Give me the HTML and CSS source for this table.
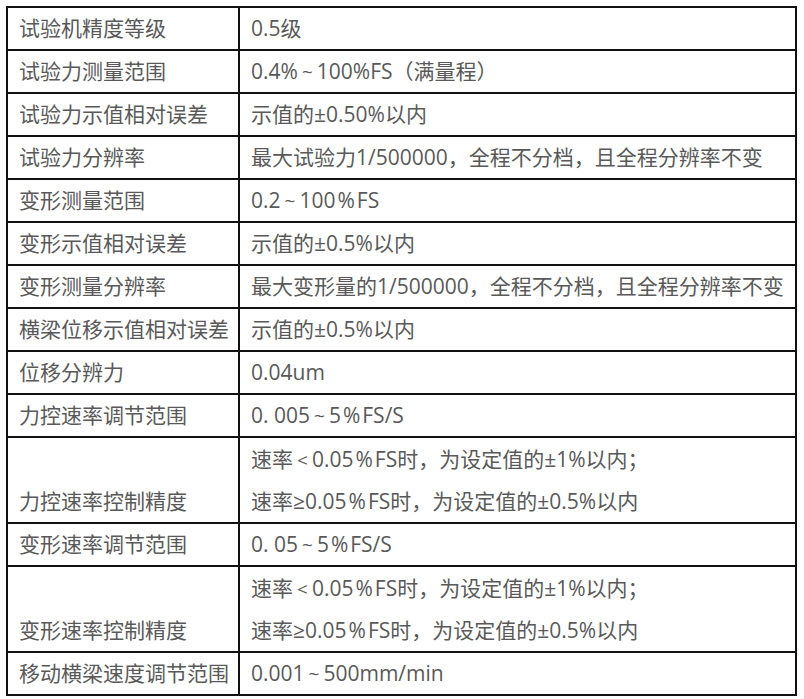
FILE: index.html
```html
<!DOCTYPE html>
<html lang="zh-CN">
<head>
<meta charset="utf-8">
<link rel="stylesheet" href="styles.css">
</head>
<body>
<div class="wrap">
<table class="spec">
<tr><td class="k">试验机精度等级</td><td class="v">0.5级</td></tr>
<tr><td class="k">试验力测量范围</td><td class="v">0.4%<span class="t">~</span>100%FS（满量程）</td></tr>
<tr><td class="k">试验力示值相对误差</td><td class="v">示值的±0.50%以内</td></tr>
<tr><td class="k">试验力分辨率</td><td class="v">最大试验力1/500000，全程不分档，且全程分辨率不变</td></tr>
<tr><td class="k">变形测量范围</td><td class="v">0.2<span class="t">~</span>100<span class="p">%</span>FS</td></tr>
<tr><td class="k">变形示值相对误差</td><td class="v">示值的±0.5%以内</td></tr>
<tr><td class="k">变形测量分辨率</td><td class="v">最大变形量的1/500000，全程不分档，且全程分辨率不变</td></tr>
<tr><td class="k">横梁位移示值相对误差</td><td class="v">示值的±0.5%以内</td></tr>
<tr><td class="k">位移分辨力</td><td class="v">0.04um</td></tr>
<tr><td class="k">力控速率调节范围</td><td class="v">0. 005<span class="t">~</span>5<span class="p">%</span>FS/S</td></tr>
<tr class="tall"><td class="k">力控速率控制精度</td><td class="v"><div class="ln">速率<span class="t">&lt;</span>0.05<span class="p">%</span>FS时，为设定值的±1%以内；</div><div class="ln">速率≥0.05<span class="p">%</span>FS时，为设定值的±0.5%以内</div></td></tr>
<tr><td class="k">变形速率调节范围</td><td class="v">0. 05<span class="t">~</span>5<span class="p">%</span>FS/S</td></tr>
<tr class="tall"><td class="k">变形速率控制精度</td><td class="v"><div class="ln">速率<span class="t">&lt;</span>0.05<span class="p">%</span>FS时，为设定值的±1%以内；</div><div class="ln">速率≥0.05<span class="p">%</span>FS时，为设定值的±0.5%以内</div></td></tr>
<tr><td class="k">移动横梁速度调节范围</td><td class="v">0.001<span class="t">~</span>500mm/min</td></tr>
</table>
</div>
</body>
</html>
```
FILE: styles.css
```css
html, body {
  margin: 0;
  padding: 0;
  background: #fff;
}
.wrap {
  padding: 6px 0 0 6px;
}
.spec {
  border-collapse: collapse;
  width: 791px;
  font-family: "Open Sans", "Noto Sans CJK SC", sans-serif;
  font-size: 21px;
  color: #595959;
}
.spec td {
  border: 2px solid #111;
  height: 39px;
  padding: 0 0 0 11px;
  line-height: 41px;
  white-space: nowrap;
  vertical-align: middle;
}
.spec .k {
  width: 219px;
}
.tall td {
  height: 82px;
}
.tall .k {
  vertical-align: bottom;
}
.ln {
  line-height: 42px;
}
.t {
  display: inline-block;
  margin: 0 4px;
  font-size: 19px;
  line-height: 1;
}
.p {
  display: inline-block;
  margin: 0 2px;
  line-height: 1;
}
```
